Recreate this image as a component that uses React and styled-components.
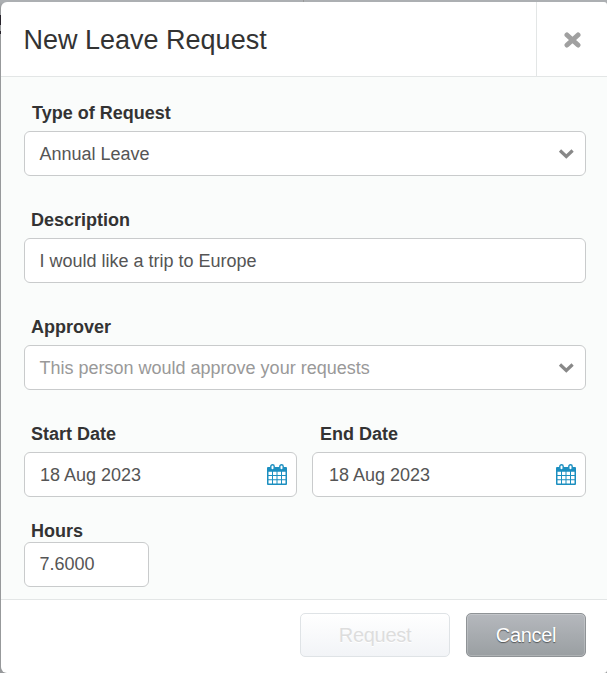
import React from 'react';
import styled, { createGlobalStyle } from 'styled-components';

const GlobalStyle = createGlobalStyle`
  *, *::before, *::after { box-sizing: border-box; }
  html, body { margin: 0; background: #a0a2a4; overflow: hidden; }
  body { font-family: "Liberation Sans", Arial, sans-serif; color: #333; }
`;

const Backdrop = styled.div`
  height: 673px;
  padding: 2px 0 0 1px;
  background:
    linear-gradient(#26222a, #26222a) 0 15px / 1px 10px no-repeat,
    linear-gradient(#26222a, #26222a) 0 31px / 1px 3px no-repeat,
    linear-gradient(#999, #999) 303px 0 / 1px 2px no-repeat,
    linear-gradient(#acafb2 0 2px, #97999b 8px);
  overflow: hidden;
`;

const Dialog = styled.section`
  display: flex;
  flex-direction: column;
  height: 671px;
  background: #fff;
  border-radius: 6px 3px 3px 6px;
  overflow: hidden;
`;

const Header = styled.header`
  display: flex;
  height: 75px;
  flex: none;
  border-bottom: 1px solid #e3e6e6;
`;

const Title = styled.h1`
  flex: 1;
  margin: 0;
  padding-left: 22.5px;
  font-size: 27px;
  font-weight: 400;
  line-height: 76px;
`;

const CloseButton = styled.button`
  display: flex;
  align-items: center;
  justify-content: center;
  width: 71px;
  padding: 1px 0 0 1px;
  border: 0;
  border-left: 1px solid #e3e6e6;
  background: none;
`;

const Form = styled.form`
  flex: none;
  height: 523px;
  padding: 24px 21px 0 23px;
  background: #fafcfb;
  border-bottom: 1px solid #e3e6e6;
`;

const Field = styled.div`
  margin-bottom: ${({ $gap = 32 }) => $gap}px;
`;

const Label = styled.label`
  display: block;
  height: ${({ $height = 30 }) => $height}px;
  padding-left: ${({ $indent = 7 }) => $indent}px;
  font-size: 18px;
  font-weight: 700;
  line-height: 24px;
`;

const Control = styled.div`
  display: flex;
  align-items: center;
  justify-content: space-between;
  width: ${({ $width }) => $width || '100%'};
  height: 45px;
  padding: 0 ${({ $end = 11 }) => $end}px 0 ${({ $start = 14.5 }) => $start}px;
  border: 1px solid #c9cbcc;
  border-radius: 6px;
  background: #fff;
  color: ${({ $muted }) => ($muted ? '#999' : '#555')};
  font-size: 18px;
  line-height: 43px;
  white-space: nowrap;
`;

const Value = styled.span`
  padding-top: 2px;
  line-height: 41px;
`;

const DateRow = styled.div`
  display: grid;
  grid-template-columns: 273px 274px;
  column-gap: 15px;
`;

const Footer = styled.footer`
  display: flex;
  justify-content: flex-end;
  gap: 16px;
  padding: 13px 21px 0 0;
`;

const Button = styled.button`
  width: ${({ $width }) => $width}px;
  height: 44px;
  padding: 0;
  border: 1px solid #8f9396;
  border-radius: 5px;
  background: linear-gradient(#b5b8bd, #9a9fa2);
  box-shadow: inset 0 0 0 1px rgba(255, 255, 255, 0.2);
  color: #fff;
  font: 400 20px/42px "Liberation Sans", Arial, sans-serif;
  letter-spacing: -0.3px;
  text-shadow: 0 1px 1px rgba(0, 0, 0, 0.5);

  &:disabled {
    border-color: #dfe3e6;
    background: linear-gradient(#fff, #f2f4f7);
    box-shadow: none;
    color: #ddd;
    text-shadow: 0 1px 0 #fff;
  }
`;

const Icon = styled.svg`
  display: block;
  flex: none;
`;

const CloseIcon = () => (
  <Icon width="17" height="16" viewBox="0 0 17 16">
    <path d="M3 3 14 13M14 3 3 13" stroke="#a0a0a0" strokeWidth="5" strokeLinecap="round" />
  </Icon>
);

const Chevron = () => (
  <Icon width="16" height="11" viewBox="0 0 16 11">
    <path d="M2 2.5 8.3 8.5 14.6 2.5" fill="none" stroke="#888" strokeWidth="3.2" />
  </Icon>
);

const CalendarIcon = () => (
  <Icon width="20" height="21" viewBox="0 0 20 21">
    <path
      fill="#1c8fc0"
      fillRule="evenodd"
      d="M1 3H19Q20 3 20 4V20Q20 21 19 21H1Q0 21 0 20V4Q0 3 1 3ZM1.5 7.7H5V11H1.5ZM6 7.7H9.5V11H6ZM10.5 7.7H14V11H10.5ZM15 7.7H18.5V11H15ZM1.5 12H5V15.3H1.5ZM6 12H9.5V15.3H6ZM10.5 12H14V15.3H10.5ZM15 12H18.5V15.3H15ZM1.5 16.3H5V19.6H1.5ZM6 16.3H9.5V19.6H6ZM10.5 16.3H14V19.6H10.5ZM15 16.3H18.5V19.6H15Z"
    />
    <rect x="3.8" y=".7" width="3.4" height="5.3" rx="1.7" fill="#fff" stroke="#1c8fc0" strokeWidth="1.4" />
    <rect x="12.8" y=".7" width="3.4" height="5.3" rx="1.7" fill="#fff" stroke="#1c8fc0" strokeWidth="1.4" />
  </Icon>
);

export default function App() {
  return (
    <>
      <GlobalStyle />
      <Backdrop>
        <Dialog role="dialog">
          <Header>
            <Title>New Leave Request</Title>
            <CloseButton type="button" aria-label="Close">
              <CloseIcon />
            </CloseButton>
          </Header>
          <Form>
            <Field>
              <Label $indent={8}>Type of Request</Label>
              <Control>
                <Value>Annual Leave</Value>
                <Chevron />
              </Control>
            </Field>
            <Field>
              <Label>Description</Label>
              <Control>
                <Value>I would like a trip to Europe</Value>
              </Control>
            </Field>
            <Field>
              <Label>Approver</Label>
              <Control $muted>
                <Value>This person would approve your requests</Value>
                <Chevron />
              </Control>
            </Field>
            <DateRow>
              <Field $gap={22}>
                <Label>Start Date</Label>
                <Control $start={15} $end={9}>
                  <Value>18 Aug 2023</Value>
                  <CalendarIcon />
                </Control>
              </Field>
              <Field $gap={22}>
                <Label $indent={8}>End Date</Label>
                <Control $start={16} $end={9}>
                  <Value>18 Aug 2023</Value>
                  <CalendarIcon />
                </Control>
              </Field>
            </DateRow>
            <Field $gap={0}>
              <Label $height={23}>Hours</Label>
              <Control $width="125px">7.6000</Control>
            </Field>
          </Form>
          <Footer>
            <Button type="button" $width={150} disabled>
              Request
            </Button>
            <Button type="button" $width={120}>
              Cancel
            </Button>
          </Footer>
        </Dialog>
      </Backdrop>
    </>
  );
}
